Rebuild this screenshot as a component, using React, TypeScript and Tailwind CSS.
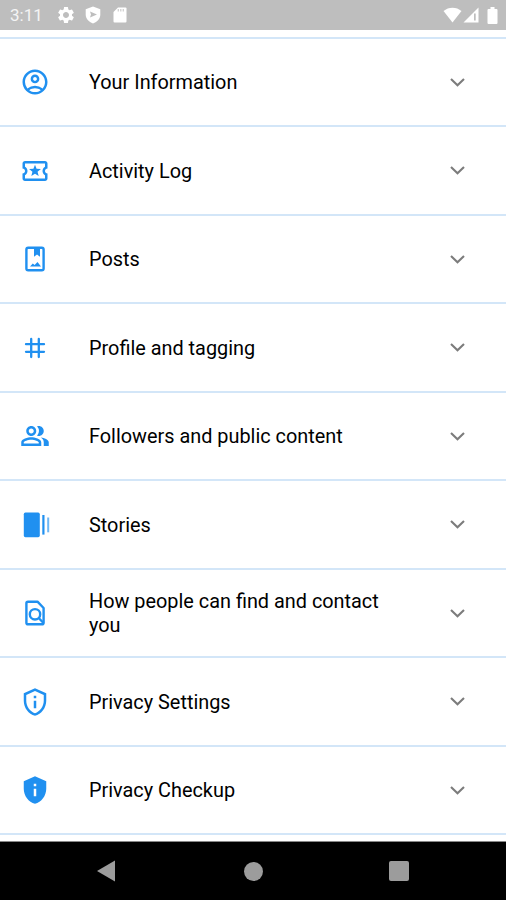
import type { IconType } from 'react-icons';
import {
  MdOutlineAccountCircle,
  MdOutlineLocalActivity,
  MdOutlinePeopleAlt,
  MdOutlinePrivacyTip,
  MdPrivacyTip,
  MdSettings,
} from 'react-icons/md';

interface Section {
  label: string;
  icon: IconType;
}

const PostsIcon: IconType = ({ className }) => (
  <svg viewBox="0 0 30 30" fill="none" className={className}>
    <rect x="6.4" y="3.7" width="17.2" height="22.6" rx="1.8" stroke="currentColor" strokeWidth="2.4" />
    <path d="M14 3.5h6v9.300l-3-2.300-3 2.300z" fill="currentColor" />
    <path d="m10 22.500 2.800-2.900 1.800 1.400 2.900-3 3.500 4.500z" fill="currentColor" />
  </svg>
);

const HashIcon: IconType = ({ className }) => (
  <svg viewBox="0 0 30 30" fill="none" stroke="currentColor" strokeWidth="2.3" strokeLinecap="round" className={className}>
    <path d="M11.200 6v18M18.800 6v18M6 11.200h18M6 18.800h18" />
  </svg>
);

const StoriesIcon: IconType = ({ className }) => (
  <svg viewBox="0 0 30 30" fill="currentColor" className={className}>
    <rect x="3.8" y="2.600" width="16" height="24.6" rx="1.6" />
    <rect x="22.3" y="5" width="2.2" height="19.6" />
    <rect x="27.2" y="7.5" width="2" height="14.8" opacity="0.65" />
  </svg>
);

const FindIcon: IconType = ({ className }) => (
  <svg viewBox="0 0 30 30" fill="none" stroke="currentColor" strokeWidth="2.4" strokeLinejoin="round" className={className}>
    <path d="M8 3.700h9.500l6.100 6.300v14.700a1.600 1.600 0 0 1-1.600 1.600H8a1.600 1.600 0 0 1-1.600-1.600V5.300A1.600 1.600 0 0 1 8 3.700z" />
    <circle cx="15" cy="16.300" r="5.200" />
    <path d="m18.700 20 4.800 5" />
  </svg>
);

const sections: Section[] = [
  { label: 'Your Information', icon: MdOutlineAccountCircle },
  { label: 'Activity Log', icon: MdOutlineLocalActivity },
  { label: 'Posts', icon: PostsIcon },
  { label: 'Profile and tagging', icon: HashIcon },
  { label: 'Followers and public content', icon: MdOutlinePeopleAlt },
  { label: 'Stories', icon: StoriesIcon },
  { label: 'How people can find and contact you', icon: FindIcon },
  { label: 'Privacy Settings', icon: MdOutlinePrivacyTip },
  { label: 'Privacy Checkup', icon: MdPrivacyTip },
];

const StatusBar = () => (
  <div className="flex h-[30px] items-center bg-[#bebebe] pl-[10px] pr-[8px] text-white">
    <span className="w-[46px] pt-px text-[17px] leading-none text-[#f4f4f4]">3:11</span>
    <MdSettings className="size-5" />
    <svg viewBox="0 0 16 18" className="ml-[9px] h-[18px] w-4">
      <path d="M8 .5 15.300 3.200v5.300c0 4-3 7.500-7.300 9C3.700 16 .7 12.500.7 8.500V3.200z" fill="currentColor" />
      <path d="m5 5.500 7 3-7 3 1-3z" fill="#bebebe" />
    </svg>
    <svg viewBox="0 0 14 16" className="ml-3 h-4 w-[14px]">
      <path d="M5 .5h7.500a1 1 0 0 1 1 1v13a1 1 0 0 1-1 1h-11a1 1 0 0 1-1-1V5z" fill="currentColor" />
      <path d="M5.300 2v2.500M7.800 2v2.500M10.300 2v2.500" stroke="#d0d0d0" strokeWidth="1.3" />
    </svg>
    <div className="ml-auto flex items-center">
      <svg viewBox="0 0 19 16" fill="currentColor" className="h-4 w-[19px]">
        <path d="M.5 4C5.500-.5 13.500-.5 18.500 4l-9 11.500z" />
      </svg>
      <svg viewBox="0 0 16 16" className="ml-px h-4 w-4">
        <path d="M15.500.5v15H.5z" fill="currentColor" />
        <path d="M11 6.500h1.700v7H11z" fill="#bebebe" />
      </svg>
      <svg viewBox="0 0 11 17" fill="currentColor" className="ml-2 h-[17px] w-[11px]">
        <path d="M3.500 0h4v2h2a1 1 0 0 1 1 1v13a1 1 0 0 1-1 1h-8a1 1 0 0 1-1-1V3a1 1 0 0 1 1-1h2z" />
      </svg>
    </div>
  </div>
);

const SectionRow = ({ label, icon: Icon }: Section) => (
  <button
    type="button"
    className="flex h-[88.5px] w-full items-center border-t-2 border-[#d3e6f8] pl-5 pr-[41px] pt-px text-left"
  >
    <Icon className="size-[30px] shrink-0 text-[#2090f0]" />
    <span className="ml-[39px] w-[300px] pt-px text-[19.87px] leading-[23.5px] text-black">{label}</span>
    <svg
      viewBox="0 0 15 9"
      fill="none"
      stroke="currentColor"
      strokeWidth="2.1"
      className="ml-auto h-[9px] w-[15px] shrink-0 text-[#7c7c7c]"
    >
      <path d="m1 1 6.500 6.300L14 1" />
    </svg>
  </button>
);

const NavBar = () => (
  <div className="flex h-[59px] items-center border-t border-[#888] bg-black pl-[96px] text-[#9c9c9c]">
    <svg viewBox="0 0 19 22" fill="currentColor" className="h-[22px] w-[19px]">
      <path d="M1 11 19 .5v21z" />
    </svg>
    <span className="ml-[129px] size-[19px] rounded-full bg-current" />
    <span className="ml-[126px] size-5 rounded-[2px] bg-current" />
  </div>
);

const App = () => {
  return (
    <div className="flex h-[900px] w-[506px] flex-col overflow-hidden bg-white font-['Roboto',sans-serif]">
      <StatusBar />
      <main className="flex-1 pt-[6.5px]">
        {sections.map((section) => (
          <SectionRow key={section.label} {...section} />
        ))}
        <div className="h-[2px] bg-[#d3e6f8]" />
      </main>
      <NavBar />
    </div>
  );
};

export default App;
